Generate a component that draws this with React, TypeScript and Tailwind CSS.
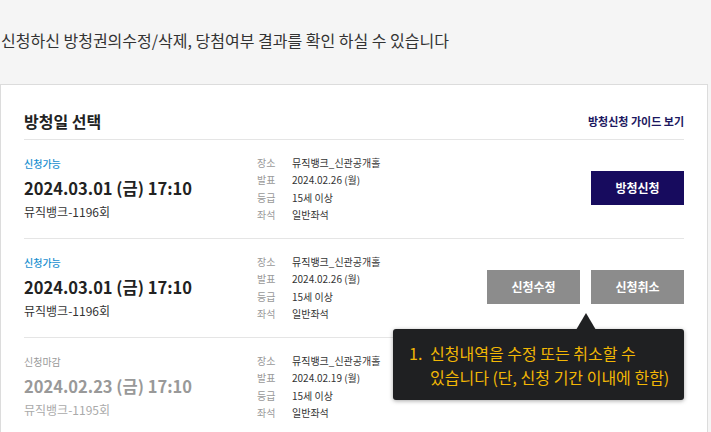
import React from "react";

type Row = {
  status: string;
  open: boolean;
  date: string;
  name: string;
  announce: string;
  action: "apply" | "edit" | "none";
};

const rows: Row[] = [
  { status: "신청가능", open: true, date: "2024.03.01 (금) 17:10", name: "뮤직뱅크-1196회", announce: "2024.02.26 (월)", action: "apply" },
  { status: "신청가능", open: true, date: "2024.03.01 (금) 17:10", name: "뮤직뱅크-1196회", announce: "2024.02.26 (월)", action: "edit" },
  { status: "신청마감", open: false, date: "2024.02.23 (금) 17:10", name: "뮤직뱅크-1195회", announce: "2024.02.19 (월)", action: "none" },
];

function Info({ announce }: { announce: string }) {
  const items: [string, string][] = [
    ["장소", "뮤직뱅크_신관공개홀"],
    ["발표", announce],
    ["등급", "15세 이상"],
    ["좌석", "일반좌석"],
  ];
  return (
    <div className="flex flex-col text-[10px] leading-[17.4px]">
      {items.map(([k, v]) => (
        <div key={k} className="flex">
          <span className="w-[35px] text-[#999]">{k}</span>
          <span className="text-[#333]">{v}</span>
        </div>
      ))}
    </div>
  );
}

export default function App() {
  return (
    <div
      className="w-[711px] h-[432px] overflow-hidden bg-[#f5f5f5]"
      style={{ fontFamily: '"Noto Sans CJK KR", "Noto Sans", sans-serif' }}
    >
      <div className="h-[84px] pl-[1px] pt-[28px] text-[16px] leading-[24px] text-[#333]">
        신청하신 방청권의수정/삭제, 당첨여부 결과를 확인 하실 수 있습니다
      </div>
      <div className="w-[708px] h-[400px] bg-white border border-[#dcdcdc] px-[23px]">
        <div className="flex items-center justify-between pt-[24px] pb-[6px] border-b border-[#e5e5e5]">
          <div className="text-[16px] leading-[24px] font-bold text-[#222]">방청일 선택</div>
          <div className="text-[11px] leading-[24px] font-bold text-[#1b1760]">방청신청 가이드 보기</div>
        </div>
        {rows.map((r, i) => (
          <div key={i} className="relative flex items-center border-b border-[#e5e5e5] pt-[12px] pb-[14px]">
            <div className="w-[233px] flex flex-col">
              <div className={`text-[10px] leading-[24px] ${r.open ? "text-[#1a8fd0] font-medium" : "text-[#999]"}`}>
                {r.status}
              </div>
              <div className={`text-[16.5px] leading-[24px] font-bold ${r.open ? "text-[#222]" : "text-[#999]"}`}>
                {r.date}
              </div>
              <div className={`text-[12px] leading-[24px] ${r.open ? "text-[#333]" : "text-[#aaa]"}`}>{r.name}</div>
            </div>
            <div className="self-start mt-[2px]">
              <Info announce={r.announce} />
            </div>
            <div className="ml-auto flex gap-[11px]">
              {r.action === "apply" && (
                <button className="w-[93px] h-[34px] bg-[#170b5e] text-white text-[12px] font-bold">방청신청</button>
              )}
              {r.action === "edit" && (
                <>
                  <button className="w-[93px] h-[34px] bg-[#8c8c8c] text-white text-[12px] font-bold">신청수정</button>
                  <button className="w-[93px] h-[34px] bg-[#8c8c8c] text-white text-[12px] font-bold">신청취소</button>
                </>
              )}
            </div>
            {r.action === "edit" && (
              <div className="absolute left-[369px] top-[90px] w-[291px] h-[71px] z-10">
                <div className="absolute left-[183px] top-[-16px] w-0 h-0 border-l-[10px] border-r-[10px] border-b-[17px] border-l-transparent border-r-transparent border-b-[#1f2022]" />
                <div className="w-full h-full rounded-[3px] bg-[#1f2022] shadow-[0_1px_4px_rgba(0,0,0,0.35)] pl-[16px] pt-[12px] text-[16px] leading-[24px] text-[#f2b705]">
                  <div className="flex">
                    <span className="w-[21px]">1.</span>
                    <span>
                      신청내역을 수정 또는 취소할 수
                      <br />
                      있습니다 (단, 신청 기간 이내에 한함)
                    </span>
                  </div>
                </div>
              </div>
            )}
          </div>
        ))}
      </div>
    </div>
  );
}
